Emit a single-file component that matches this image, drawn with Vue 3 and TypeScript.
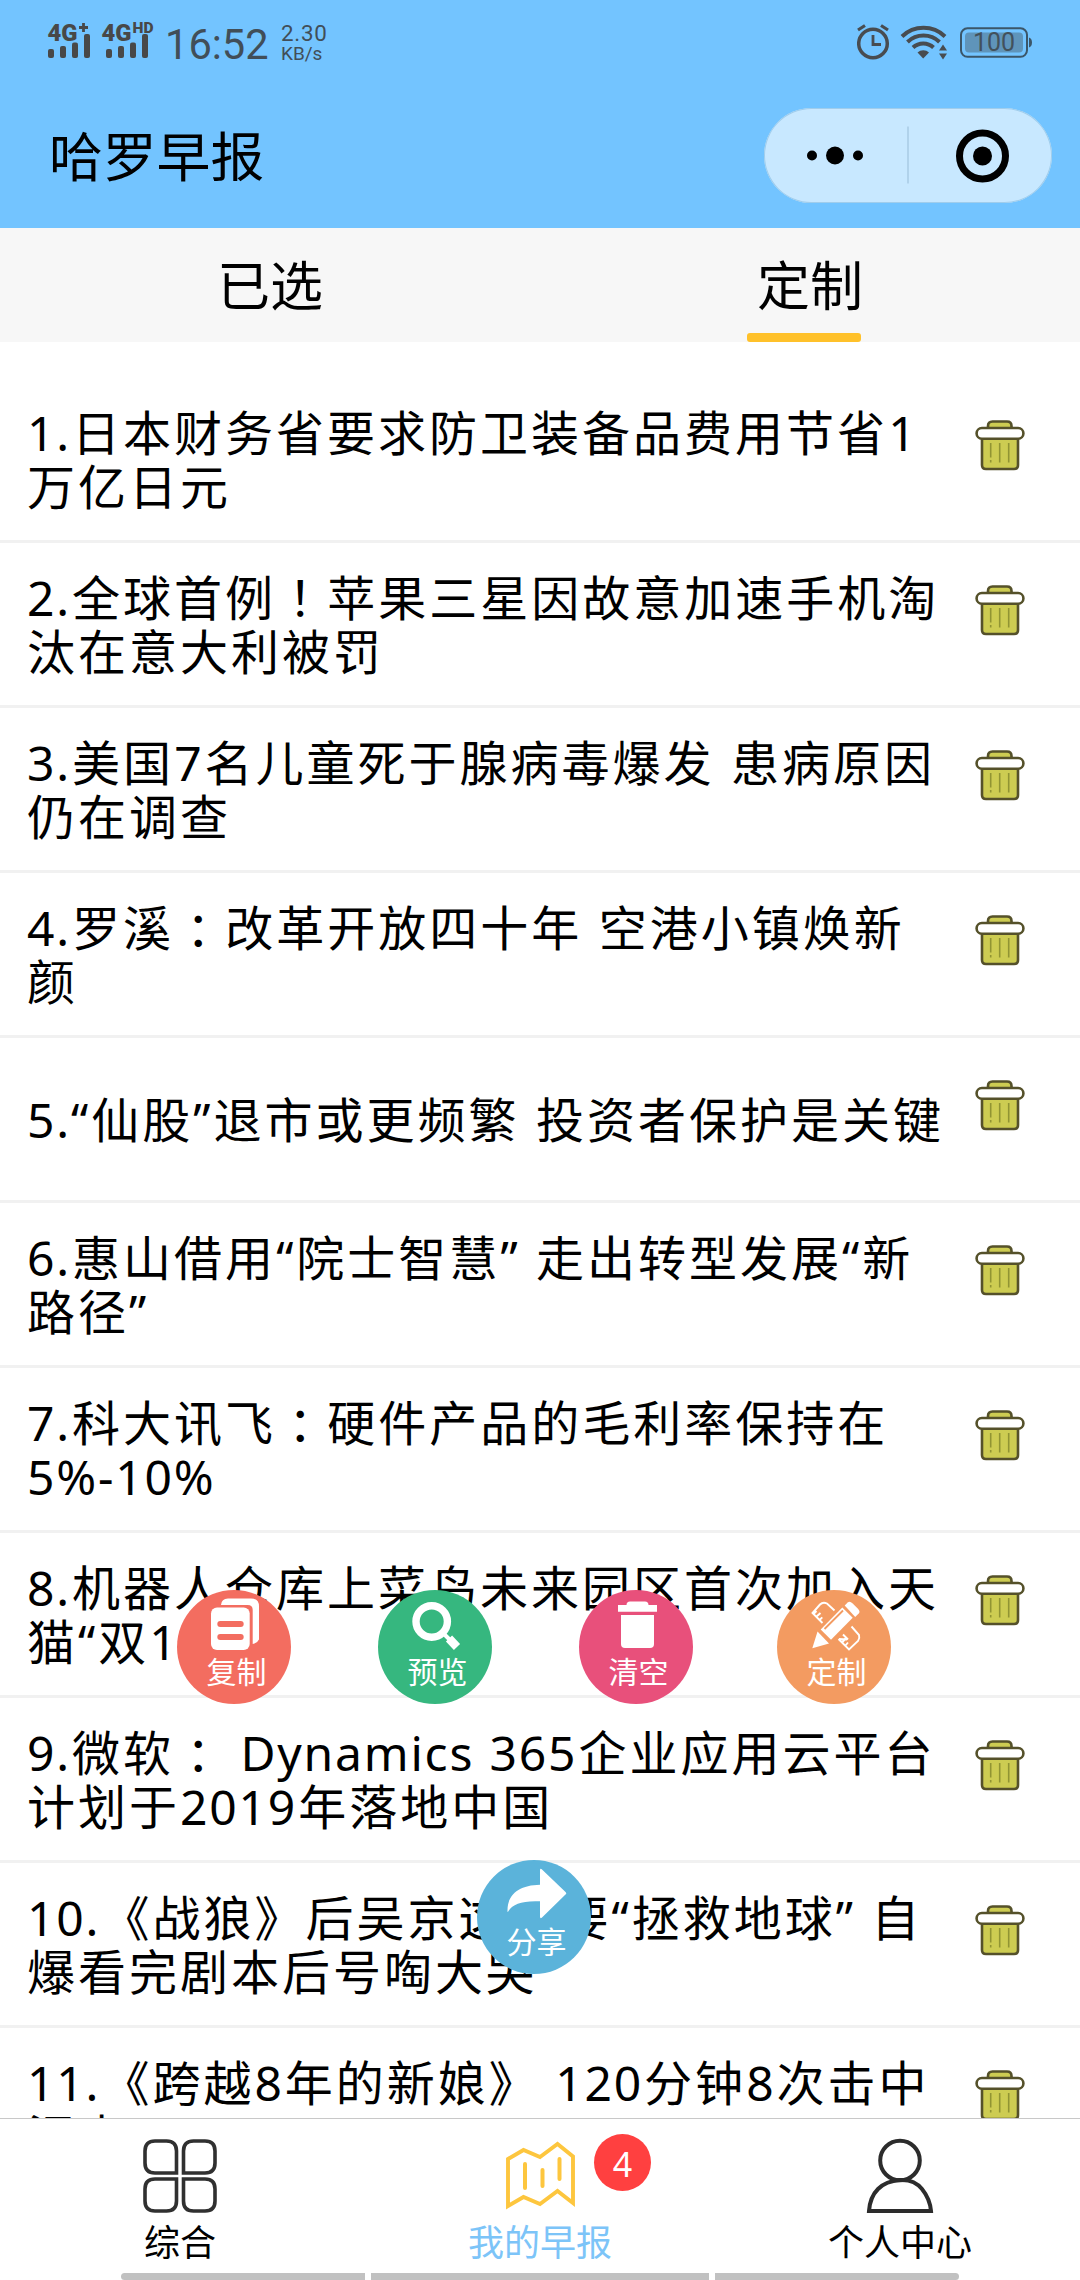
<script setup lang="ts">
interface Run {
  text: string
  kind: 'cjk' | 'latin' | 'mid' | 'colon'
}

const headlines: string[][] = [
  ['1.日本财务省要求防卫装备品费用节省1', '万亿日元'],
  ['2.全球首例！苹果三星因故意加速手机淘', '汰在意大利被罚'],
  ['3.美国7名儿童死于腺病毒爆发 患病原因', '仍在调查'],
  ['4.罗溪：改革开放四十年 空港小镇焕新', '颜'],
  ['5.“仙股”退市或更频繁 投资者保护是关键'],
  ['6.惠山借用“院士智慧” 走出转型发展“新', '路径”'],
  ['7.科大讯飞：硬件产品的毛利率保持在', '5%-10%'],
  ['8.机器人仓库上菜鸟未来园区首次加入天', '猫“双11”'],
  ['9.微软： Dynamics 365企业应用云平台', '计划于2019年落地中国'],
  ['10.《战狼》后吴京这次要“拯救地球” 自', '爆看完剧本后号啕大哭'],
  ['11.《跨越8年的新娘》 120分钟8次击中', '泪点'],
]

function kindOf(text: string): Run['kind'] {
  if (text === '：') return 'colon'
  if (text === '！') return 'mid'
  return /^[\x20-\x7e“”]/.test(text) ? 'latin' : 'cjk'
}

// Splits a line into Latin, Chinese and centred-punctuation runs.
function runs(line: string): Run[] {
  const parts = line.match(/[\x20-\x7e“”]+|[：！]|[^\x20-\x7e“”：！]+/g) ?? []
  return parts.map((text) => ({ text, kind: kindOf(text) }))
}

const bars = [9, 12, 15.5, 24]
</script>

<template>
  <div class="app">
    <header class="header">
      <div class="status">
        <svg class="signal" width="112" height="60" viewBox="0 0 112 60">
          <g fill="#484848">
            <rect v-for="(h, i) in bars" :key="'a' + i" :x="i * 12" :y="58 - h" width="6" :height="h" rx="2" />
            <rect v-for="(h, i) in bars" :key="'b' + i" :x="58 + i * 12" :y="58 - h" width="6" :height="h" rx="2" />
            <path d="M31 27.500h9M35.500 23v9" stroke="#484848" stroke-width="2.800" />
          </g>
          <g class="signal-text">
            <text x="-0.500" y="40.500" font-size="24" textLength="30" lengthAdjust="spacingAndGlyphs">4G</text>
            <text x="53.500" y="40.500" font-size="24" textLength="30" lengthAdjust="spacingAndGlyphs">4G</text>
            <text x="84.500" y="33" font-size="14" textLength="21" lengthAdjust="spacingAndGlyphs">HD</text>
          </g>
        </svg>
        <span class="clock">16:52</span>
        <div class="speed"><span class="rate">2.30</span><span class="unit">KB/s</span></div>
        <svg class="status-icons" width="176" height="40" viewBox="0 0 176 40" fill="none">
          <g stroke="#484c50">
            <circle cx="16" cy="22.500" r="14.300" stroke-width="3.500" />
            <path d="M16 14v9.500h8" stroke-width="2.800" />
            <path d="M1 9l7-4.500M31 9l-7-4.500" stroke-width="3.200" />
            <path d="M45 15.500a31 31 0 0 1 43 0" stroke-width="4" />
            <path d="M50.500 21a23 23 0 0 1 32 0" stroke-width="4" />
            <path d="M56 26.500a15 15 0 0 1 20.500 0" stroke-width="4" />
          </g>
          <path d="M60.500 31.500a8.500 8.500 0 0 1 11.500 0l-5.800 6z" fill="#484c50" />
          <path d="M82 29.500l4-6 4 6zM82 32.500l4 6 4-6z" fill="#484c50" />
          <rect x="104" y="7.300" width="66" height="28.500" rx="6.500" stroke="#3b5669" stroke-width="2" />
          <rect x="108" y="11.500" width="58" height="20" rx="4" fill="#5f94ba" />
          <path d="M172 16.500q3 1 3 5t-3 5z" fill="#3b5669" />
          <text class="battery-text" x="137" y="30.300" text-anchor="middle" textLength="42">100</text>
        </svg>
      </div>
      <div class="titlebar">
        <h1 class="title">哈罗早报</h1>
        <div class="capsule">
          <svg width="288" height="94" viewBox="0 0 288 94">
            <circle cx="48" cy="47.500" r="5" />
            <circle cx="71" cy="47.500" r="9" />
            <circle cx="94" cy="47.500" r="5" />
            <path d="M144 18.500v57" stroke="#a9cbe4" stroke-width="1.500" />
            <circle cx="218.500" cy="48" r="23" fill="none" stroke="#000" stroke-width="7" />
            <circle cx="218.500" cy="48" r="9.500" />
          </svg>
        </div>
      </div>
    </header>

    <nav class="tabs">
      <div class="tab">已选</div>
      <div class="tab tab-active">定制</div>
    </nav>

    <main class="list">
      <div v-for="(lines, i) in headlines" :key="i" class="row">
        <div class="headline">
          <div v-for="(line, j) in lines" :key="j" class="line">
            <span v-for="(run, k) in runs(line)" :key="k" :class="run.kind">{{ run.text }}</span>
          </div>
        </div>
        <svg class="trash" width="50" height="51" viewBox="-1 0 50 51" stroke="#55512a" stroke-width="2.600">
          <path d="M12 9V6q0-4.500 4.500-4.500h14.500q4.500 0 4.500 4.500v3" fill="#cdcc52" />
          <path d="M6 18h36v27q0 4-4 4H10q-4 0-4-4z" fill="#cdcc52" />
          <rect x="0.600" y="8" width="46.800" height="10.700" rx="5.300" fill="#fff" />
          <path d="M14.700 23v14.500M14.700 40v2.500M23.700 23v19.500M32.700 23v19.500" stroke="#919433" stroke-width="1.600" />
        </svg>
      </div>
    </main>

    <footer class="bottom">
      <div class="nav-item">
        <svg class="nav-icon" width="76" height="76" viewBox="0 0 76 76" fill="none" stroke="#303030" stroke-width="3.600">
          <path d="M34.500 35V13q0-10-10-10H13Q3 3 3 13v12q0 10 10 10z" />
          <path d="M41.500 35V13q0-10 10-10H63q10 0 10 10v12q0 10-10 10z" transform="translate(0 0)" />
          <path d="M34.500 41v22q0 10-10 10H13Q3 73 3 63V51q0-10 10-10z" />
          <path d="M41.500 41v22q0 10 10 10H63q10 0 10-10V51q0-10-10-10z" />
        </svg>
        <span>综合</span>
      </div>
      <div class="nav-item nav-active">
        <svg class="nav-icon" width="76" height="76" viewBox="0 0 76 76" fill="none" stroke="#fdc63e" stroke-width="3.900">
          <path d="M6 21L21.500 12 38 19 55.500 6 71 18.500V65L55.500 53 38 66 21.500 59 6 68z" />
          <path d="M23 26v24M40.500 32v16M57.500 21v20" stroke-width="4" stroke-linecap="round" />
        </svg>
        <span>我的早报</span>
        <b class="badge">4</b>
      </div>
      <div class="nav-item">
        <svg class="nav-icon" width="76" height="76" viewBox="0 0 76 76" fill="none" stroke="#2c2c2c" stroke-width="4">
          <circle cx="38" cy="22.500" r="19.800" />
          <path d="M7 73q1-14 9-22t22-9 22 9 9 22z" />
        </svg>
        <span>个人中心</span>
      </div>
      <div class="gesture"><i></i><i></i><i></i></div>
    </footer>

    <button class="fab copy">
      <svg viewBox="0 0 114 114" fill="#fff">
        <rect x="34" y="17.500" width="38.700" height="42.500" rx="6" />
        <path d="M44 15q.5-6.500 7-6.500H74q8 0 8 8v33q-1.500 3.500-6.300 4.500V20q0-5-5-5z" />
        <path d="M43.300 34h20.400M43.300 47h20.400" stroke="#f36d60" stroke-width="6" stroke-linecap="round" />
      </svg>
      <span>复制</span>
    </button>
    <button class="fab preview">
      <svg viewBox="0 0 114 114" fill="none" stroke="#fff">
        <circle cx="53.700" cy="31.500" r="15.700" stroke-width="7.400" />
        <path d="M65 43l7 7" stroke-width="4" />
        <path d="M71 48.500l8 8.500" stroke-width="8.500" />
      </svg>
      <span>预览</span>
    </button>
    <button class="fab clear">
      <svg viewBox="0 0 114 114" fill="#fff">
        <path d="M39 15h8.500q0-3.500 3.500-3.500h15q3.500 0 3.500 3.500H78v6.700H39z" />
        <path d="M42 25h33v29q0 4-4 4H46q-4 0-4-4z" />
      </svg>
      <span>清空</span>
    </button>
    <button class="fab custom">
      <svg viewBox="0 0 114 114" fill="#fff">
        <path d="M35.300 58.300L40.500 41.500 52 53.500z" />
        <path d="M43.700 39.500L65.300 17.500 75.700 27.700 54 49.700z" />
        <path d="M47.500 39L66 20.500" stroke="#f39b61" stroke-width="1.800" />
        <path d="M67.700 15.500l3-3q2-2 5 1l5 5q3 3 1 5l-3.500 3.500z" />
        <g fill="none" stroke="#fff" stroke-width="1.900">
          <path d="M57.500 20.500L50 13.500q-4-2-7 1L35.500 23 45.500 33M39 27l4.500-4M42.500 30l2.800-2.600M36.500 24l3-3" />
          <path d="M74.500 36.500L82 45q1 3-1 6l-9 8.500L61.500 49M65 52.500l4.500-5M68 56l3-3.500M62 49l8 .5M66 44.500l5 5" />
        </g>
      </svg>
      <span>定制</span>
    </button>
    <button class="fab share">
      <svg viewBox="0 0 114 114" fill="#fff">
        <path d="M30.500 51.500C30 34 43 25 63 24.700V10q.3-2 2-.5L88.500 32q1.500 1.300 0 2.600L65 57.500q-1.700 1.500-2-.5V41.300C45 40.500 36 44 31.500 51q-.8 1.500-1 .5z" />
      </svg>
      <span>分享</span>
    </button>
  </div>
</template>

<style>
body {
  margin: 0;
}
</style>

<style scoped>
.app {
  position: relative;
  display: flex;
  flex-direction: column;
  width: 1080px;
  height: 2280px;
  overflow: hidden;
  background: #fff;
  color: #000;
  font-family: 'Noto Sans CJK SC', sans-serif;
}
.header {
  flex: none;
  height: 228px;
  background: #73c4ff;
}
.status {
  display: flex;
  height: 84px;
  font-family: Roboto, sans-serif;
  color: #414e58;
}
.signal {
  margin-left: 48px;
  overflow: visible;
}
.signal-text {
  font-family: Roboto, sans-serif;
  font-weight: 900;
  fill: #484848;
}
.clock {
  margin-left: 5px;
  width: 112px;
  padding-top: 20px;
  font-size: 41.6px;
  line-height: 50px;
}
.speed {
  display: flex;
  flex-direction: column;
  margin-left: 4px;
  padding-top: 23px;
}
.rate {
  font-size: 22.4px;
  line-height: 21px;
  letter-spacing: 0.7px;
}
.unit {
  font-size: 19px;
  line-height: 19px;
}
.status-icons {
  margin: 21px 47px 0 auto;
}
.battery-text {
  font-family: Roboto, sans-serif;
  font-size: 25px;
  fill: #42515c;
}
.titlebar {
  display: flex;
  align-items: center;
  justify-content: space-between;
  height: 143px;
  padding: 0 28px 0 49px;
}
.title {
  margin: -3px 0 0;
  font-size: 53.8px;
  font-weight: 400;
  line-height: 60px;
}
.capsule {
  box-sizing: border-box;
  width: 288px;
  height: 95px;
  border-radius: 48px;
  background: #c8e8ff;
  box-shadow: inset 0 0 0 1px #a0cdec;
}
.capsule svg {
  display: block;
}
.tabs {
  flex: none;
  display: flex;
  height: 114px;
  background: #f7f7f7;
}
.tab {
  position: relative;
  flex: 1;
  text-align: center;
  font-size: 53px;
  line-height: 111px;
}
.tab-active::after {
  content: '';
  position: absolute;
  left: 207px;
  bottom: 0;
  width: 114px;
  height: 9px;
  border-radius: 3px;
  background: #ffc12a;
}
.list {
  flex: 1;
  min-height: 0;
  padding-top: 36px;
  overflow: hidden;
}
.row {
  box-sizing: border-box;
  display: flex;
  align-items: center;
  justify-content: space-between;
  height: 165px;
  padding: 0 55px 0 27px;
  border-bottom: 3px solid #f1f1f1;
}
.headline {
  padding-bottom: 5px;
}
.line {
  height: 54px;
  font-size: 48px;
  line-height: 54px;
  letter-spacing: 3px;
  white-space: pre;
}
.latin {
  margin-right: 1.2px;
  font-family: 'Noto Sans', sans-serif;
  line-height: 1;
  letter-spacing: 1.8px;
  word-spacing: 1px;
}
.mid {
  font-family: 'Noto Sans CJK TC', sans-serif;
}
.colon {
  padding-left: 12px;
  margin-right: -12px;
}
.trash {
  flex: none;
  align-self: flex-start;
  margin-top: 42px;
}
.bottom {
  position: relative;
  box-sizing: border-box;
  flex: none;
  display: flex;
  height: 162px;
  border-top: 1px solid #c8c8c8;
  background: #fff;
}
.nav-item {
  position: relative;
  flex: 1;
  display: flex;
  flex-direction: column;
  align-items: center;
  font-size: 36px;
  line-height: 48px;
}
.nav-icon {
  margin: 19px 0 2px;
}
.nav-active {
  color: #7cc4f8;
}
.badge {
  position: absolute;
  left: 234px;
  top: 15px;
  width: 57px;
  height: 57px;
  border-radius: 50%;
  background: #ff4040;
  color: #fff;
  font: 400 34px/60px 'Noto Sans', sans-serif;
  text-align: center;
}
.gesture {
  position: absolute;
  left: 121px;
  bottom: 0;
  display: flex;
  gap: 6px;
  width: 838px;
  height: 7px;
}
.gesture i {
  flex: 244;
  background: #c1c1c1;
}
.gesture i:nth-child(2) {
  flex: 338;
}
.gesture i:first-child {
  border-radius: 4px 0 0 4px;
}
.gesture i:last-child {
  border-radius: 0 4px 4px 0;
}
.fab {
  position: absolute;
  top: 1590px;
  width: 114px;
  height: 114px;
  padding: 0;
  border: 0;
  border-radius: 50%;
  color: #fff;
}
.fab svg {
  position: absolute;
  inset: 0;
}
.fab span {
  position: absolute;
  left: 5px;
  right: 0;
  top: 60px;
  font: 400 30px/40px 'Noto Sans CJK SC', sans-serif;
  text-align: center;
}
.copy {
  left: 177px;
  background: #f36d60;
}
.preview {
  left: 378px;
  background: #36b77f;
}
.clear {
  left: 579px;
  background: #e8507b;
}
.custom {
  left: 777px;
  background: #f39b61;
}
.share {
  left: 477px;
  top: 1860px;
  background: #5bb3da;
}
</style>
